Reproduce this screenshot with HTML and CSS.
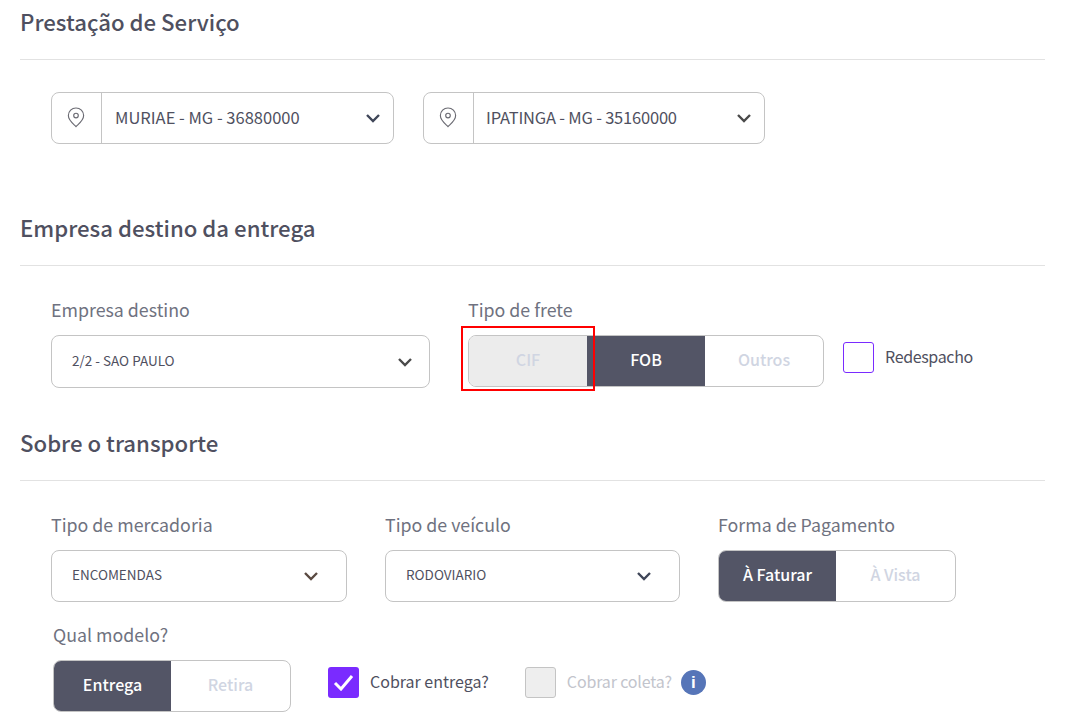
FILE: index.html
```html
<!DOCTYPE html>
<html>

<head>
    <meta charset="utf-8">
    <title>Prestação de Serviço</title>
    <link rel="stylesheet" href="styles.css">
</head>

<body>
    <div class="page">
        <h2 class="title title-first">Prestação de Serviço</h2>
        <div class="row row-places">
            <div class="place place-a">
                <span class="place-icon">
                    <svg width="18" height="21" viewBox="0 0 18 22" fill="none" stroke="#6b6b73" stroke-width="1.2"><path d="M9 20.5 C7 18.2 1 14.5 1 9 A8 8 0 0 1 17 9 C17 14.5 11 18.2 9 20.5 Z"/><circle cx="9" cy="9" r="2.4"/></svg>
                </span>
                <span class="place-text">MURIAE - MG - 36880000</span>
                <svg class="chev" width="16" height="10" viewBox="0 0 16 10"><path d="M2 2 L8 8 L14 2" fill="none" stroke="#3f4658" stroke-width="2.4"/></svg>
            </div>
            <div class="place place-b">
                <span class="place-icon">
                    <svg width="18" height="21" viewBox="0 0 18 22" fill="none" stroke="#6b6b73" stroke-width="1.2"><path d="M9 20.5 C7 18.2 1 14.5 1 9 A8 8 0 0 1 17 9 C17 14.5 11 18.2 9 20.5 Z"/><circle cx="9" cy="9" r="2.4"/></svg>
                </span>
                <span class="place-text">IPATINGA - MG - 35160000</span>
                <svg class="chev" width="16" height="10" viewBox="0 0 16 10"><path d="M2 2 L8 8 L14 2" fill="none" stroke="#4a4a4a" stroke-width="2.4"/></svg>
            </div>
        </div>

        <h2 class="title title-second">Empresa destino da entrega</h2>
        <div class="row row-company">
            <div class="field field-company">
                <label class="label">Empresa destino</label>
                <div class="select">
                    <span class="select-text">2/2 - SAO PAULO</span>
                    <svg class="chev" width="16" height="10" viewBox="0 0 16 10"><path d="M2 2 L8 8 L14 2" fill="none" stroke="#4a4a4a" stroke-width="2.4"/></svg>
                </div>
            </div>
            <div class="field field-freight">
                <label class="label">Tipo de frete</label>
                <div class="toggle toggle-three">
                    <div class="opt opt-disabled">CIF</div>
                    <div class="opt opt-on">FOB</div>
                    <div class="opt">Outros</div>
                </div>
                <div class="red-box"></div>
            </div>
            <div class="check-line check-redespacho">
                <span class="check check-empty"></span>
                <span class="check-text check-text-tight">Redespacho</span>
            </div>
        </div>

        <h2 class="title title-third">Sobre o transporte</h2>
        <div class="row row-transport">
            <div class="field field-goods">
                <label class="label">Tipo de mercadoria</label>
                <div class="select select-wide-pad">
                    <span class="select-text">ENCOMENDAS</span>
                    <svg class="chev" width="16" height="10" viewBox="0 0 16 10"><path d="M2 2 L8 8 L14 2" fill="none" stroke="#5a4a42" stroke-width="2.4"/></svg>
                </div>
            </div>
            <div class="field field-vehicle">
                <label class="label">Tipo de veículo</label>
                <div class="select select-wide-pad">
                    <span class="select-text">RODOVIARIO</span>
                    <svg class="chev" width="16" height="10" viewBox="0 0 16 10"><path d="M2 2 L8 8 L14 2" fill="none" stroke="#3f4658" stroke-width="2.4"/></svg>
                </div>
            </div>
            <div class="field">
                <label class="label">Forma de Pagamento</label>
                <div class="toggle toggle-two">
                    <div class="opt opt-on">À Faturar</div>
                    <div class="opt">À Vista</div>
                </div>
            </div>
        </div>

        <div class="row row-model">
            <div class="field">
                <label class="label">Qual modelo?</label>
                <div class="toggle toggle-two">
                    <div class="opt opt-on">Entrega</div>
                    <div class="opt">Retira</div>
                </div>
            </div>
            <div class="check-line check-entrega">
                <span class="check check-on">
                    <svg width="21" height="17" viewBox="0 0 21 17"><path d="M2 9 L8 15 L19 2" fill="none" stroke="#fff" stroke-width="3"/></svg>
                </span>
                <span class="check-text">Cobrar entrega?</span>
            </div>
            <div class="check-line check-coleta">
                <span class="check check-off"></span>
                <span class="check-text check-text-off">Cobrar coleta?</span>
                <span class="info">i</span>
            </div>
        </div>
    </div>
</body>

</html>
```

FILE: styles.css
```css
*{
    padding: 0;
    margin: 0;
    box-sizing: border-box;
}
html,body{
    width: 100%;
    height: 100%;
    overflow: hidden;
    background-color: #fff;
}
body{
    font-family: "Noto Sans CJK SC", "Noto Sans", sans-serif;
    color: #4f5060;
}
.page{
    padding: 0 20px;
}
.title{
    font-size: 22.2px;
    line-height: 30px;
    font-weight: 500;
    color: #4f5060;
    border-bottom: 1px solid #e2e2e2;
    padding-bottom: 23px;
}
.title-first{
    margin-top: 6px;
}
.title-second{
    margin-top: 68px;
}
.title-third{
    margin-top: 39px;
}
.row{
    display: flex;
    padding-left: 31px;
}
.row-places{
    margin-top: 32px;
}
.place{
    display: flex;
    align-items: center;
    height: 52px;
    border: 1px solid #c4c4c4;
    border-radius: 8px;
    font-size: 16.5px;
    color: #4f5060;
}
.place-a{
    width: 343px;
}
.place-b{
    width: 342px;
    margin-left: 29px;
}
.place-icon{
    display: flex;
    align-items: center;
    justify-content: center;
    width: 50px;
    height: 100%;
    padding: 0 2px 2px 0;
    border-right: 1px solid #c4c4c4;
    flex-shrink: 0;
}
.place-text{
    flex: 1;
    padding: 0 0 2px 13px;
}
.place-b .place-text{
    padding-left: 12px;
    letter-spacing: -0.2px;
}
.place .chev{
    margin-right: 12px;
}
.label{
    display: block;
    height: 24px;
    font-size: 17.8px;
    line-height: 22px;
    color: #6f7280;
    margin-bottom: 13px;
}
.select{
    display: flex;
    align-items: center;
    justify-content: space-between;
    height: 52px;
    padding: 0 16px 0 20px;
    border: 1px solid #c4c4c4;
    border-radius: 8px;
    font-size: 13.5px;
    color: #4f5060;
}
.select-text{
    padding-bottom: 4px;
}
.select-wide-pad{
    padding-right: 27px;
}
.row-company{
    margin-top: 32px;
    align-items: flex-start;
}
.field{
    position: relative;
}
.field-company{
    width: 379px;
}
.field-company .select{
    height: 53px;
}
.field-freight{
    margin-left: 38px;
}
.toggle{
    display: flex;
    height: 52px;
    border: 1px solid #c4c4c4;
    border-radius: 8px;
    overflow: hidden;
    font-size: 16px;
    font-weight: 500;
}
.toggle-three{
    width: 356px;
}
.toggle-three .opt{
    width: 118px;
}
.toggle-two{
    width: 238px;
}
.toggle-two .opt{
    flex: 1;
}
.toggle-two .opt-on{
    flex: none;
    width: 117px;
}
.opt{
    display: flex;
    align-items: center;
    justify-content: center;
    padding-bottom: 5px;
    color: #d0d5e2;
}
.opt-on{
    background-color: #535566;
    color: #fff;
}
.opt-disabled{
    background-color: #ececec;
}
.red-box{
    position: absolute;
    left: -7px;
    top: 28px;
    width: 134px;
    height: 65px;
    border: 2px solid #f00;
}
.check-line{
    display: flex;
    align-items: center;
    font-size: 16px;
}
.check-redespacho{
    margin-left: 19px;
    margin-top: 44px;
}
.check{
    display: flex;
    align-items: center;
    justify-content: center;
    width: 31px;
    height: 31px;
    border-radius: 3px;
    flex-shrink: 0;
}
.check-empty{
    border: 1px solid #7a2bff;
}
.check-on{
    background-color: #7a2bff;
}
.check-off{
    background-color: #eee;
    border: 1px solid #c4c4c4;
}
.check-text{
    margin-left: 11px;
    padding-bottom: 4px;
    color: #4f5060;
}
.check-text-tight{
    letter-spacing: -0.35px;
}
.check-text-off{
    letter-spacing: -0.15px;
    color: #c2c4cc;
}
.info{
    display: flex;
    align-items: center;
    justify-content: center;
    width: 25px;
    height: 25px;
    margin-left: 9px;
    border-radius: 50%;
    background-color: #5675b8;
    color: #fff;
    font-family: "Liberation Sans", sans-serif;
    font-size: 17px;
    font-weight: 700;
}
.row-transport{
    margin-top: 32px;
}
.field-goods{
    width: 296px;
}
.field-vehicle{
    width: 295px;
    margin-left: 38px;
    margin-right: 38px;
}
.row-model{
    margin-top: 21px;
    padding-left: 33px;
}
.check-entrega{
    margin-left: 37px;
    margin-top: 44px;
    height: 31px;
}
.check-coleta{
    margin-left: 36px;
    margin-top: 44px;
    height: 31px;
}
```
